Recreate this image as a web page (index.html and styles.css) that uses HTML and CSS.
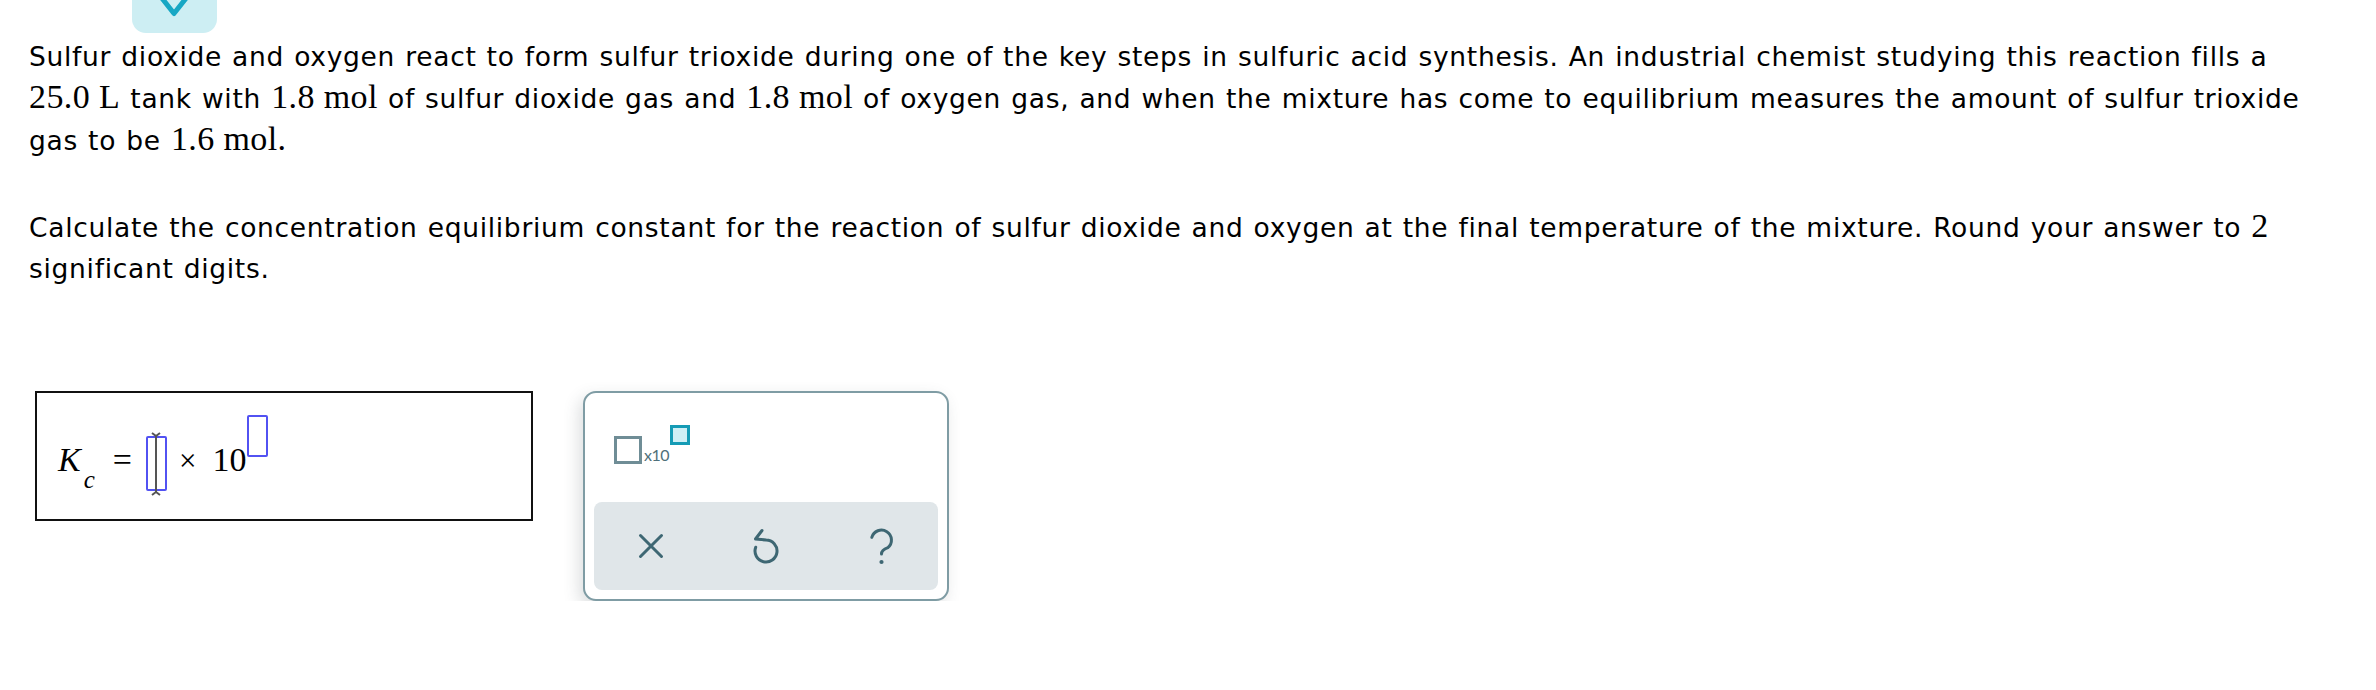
FILE: index.html
```html
<!DOCTYPE html>
<html lang="en">
<head>
<meta charset="utf-8">
<title>Equilibrium constant question</title>
<link rel="stylesheet" href="styles.css">
</head>
<body>
<div class="tab">
  <svg class="chev" width="85" height="33" viewBox="0 0 85 33"><polyline points="29,-3 42,13.5 55,-3" fill="none" stroke="#17a7c4" stroke-width="5" stroke-linecap="round" stroke-linejoin="round"/></svg>
</div>
<div class="question">
  <p class="p1">Sulfur dioxide and oxygen react to form sulfur trioxide during one of the key steps in sulfuric acid synthesis. An industrial chemist studying this reaction fills a <span class="m">25.0 L</span> tank with <span class="m">1.8 mol</span> of sulfur dioxide gas and <span class="m">1.8 mol</span> of oxygen gas, and when the mixture has come to equilibrium measures the amount of sulfur trioxide gas to be <span class="m">1.6 mol.</span></p>
  <p class="p2">Calculate the concentration equilibrium constant for the reaction of sulfur dioxide and oxygen at the final temperature of the mixture. Round your answer to <span class="m">2</span> significant digits.</p>
</div>
<div class="answer-row">
  <div class="answer-box">
    <div class="expr"><span class="var">K</span><span class="sub">c</span><span class="eq">=</span><span class="slot main"><svg class="cursor" width="12" height="64" viewBox="0 0 12 64"><path d="M6 3 V61 M2 1 L6 4 L10 1 M2 63 L6 60 L10 63" fill="none" stroke="#555" stroke-width="2"/></svg></span><span class="times">×</span><span class="ten">10</span><span class="slot sup"></span></div>
  </div>
  <div class="palette">
    <div class="tpl">
      <span class="tpl-box"></span><span class="tpl-x">x10</span><span class="tpl-sup"></span>
    </div>
    <div class="actions">
      <button class="act" aria-label="Clear"><svg width="26" height="26" viewBox="0 0 26 26"><path d="M2.5 2.5 L23.5 23.5 M23.5 2.5 L2.5 23.5" stroke="#3e6773" stroke-width="3" stroke-linecap="round" fill="none"/></svg></button>
      <button class="act" aria-label="Undo"><svg width="32" height="38" viewBox="0 0 32 38"><path d="M16 13 A11 11 0 1 1 5.7 20.2 M12 3.5 L5.5 12 L16 13" stroke="#3e6773" stroke-width="3" stroke-linecap="round" stroke-linejoin="round" fill="none"/></svg></button>
      <button class="act" aria-label="Help"><svg width="26" height="38" viewBox="0 0 26 38"><path d="M3.8 10.4 A10 10 0 1 1 19.9 20.7 Q13.5 23 13.5 27" stroke="#3e6773" stroke-width="3" stroke-linecap="round" fill="none"/><circle cx="13.5" cy="35" r="2.1" fill="#3e6773"/></svg></button>
    </div>
  </div>
</div>
</body>
</html>
```

FILE: styles.css
```css
html, body {
  margin: 0;
  padding: 0;
  background: #ffffff;
}

body {
  font-family: "DejaVu Sans", Verdana, sans-serif;
  color: #000;
}

.tab {
  width: 85px;
  height: 33px;
  margin-left: 132px;
  background: #cdeef3;
  border-radius: 0 0 14px 14px;
  overflow: hidden;
}

.chev {
  display: block;
}

.question {
  padding: 0 56px 0 29px;
  font-size: 26.5px;
  letter-spacing: 0.7px;
  word-spacing: 1px;
}

.question p {
  margin: 0;
  line-height: 42px;
}

.p1 {
  margin-top: 3px !important;
}

.p2 {
  margin-top: 45px !important;
  line-height: 41px !important;
}

.m {
  font-family: "Liberation Serif", "Times New Roman", serif;
  font-size: 34px;
  line-height: normal;
  letter-spacing: 0.4px;
  word-spacing: 0;
}

.answer-row {
  display: flex;
  align-items: flex-start;
  gap: 50px;
  margin: 102px 0 0 35px;
}

.answer-box {
  width: 498px;
  height: 130px;
  box-sizing: border-box;
  border: 2px solid #111;
  padding: 22px 0 0 21px;
}

.expr {
  font-family: "Liberation Serif", "Times New Roman", serif;
  font-size: 34px;
  line-height: 34px;
  white-space: nowrap;
}

.var {
  font-style: italic;
}

.sub {
  font-style: italic;
  font-size: 25px;
  vertical-align: -17px;
  margin-left: 3px;
}

.eq {
  margin: 0 14px 0 18px;
}

.slot {
  display: inline-block;
  box-sizing: border-box;
  border: 2px solid #5252f2;
  border-radius: 2px;
  position: relative;
}

.slot.main {
  width: 21px;
  height: 55px;
  vertical-align: -20px;
}

.cursor {
  position: absolute;
  left: 2.5px;
  top: -6px;
}

.times {
  margin: 0 16px 0 12px;
  font-size: 31px;
}

.slot.sup {
  width: 21px;
  height: 42px;
  vertical-align: 14px;
  margin-left: 1px;
}

.palette {
  width: 366px;
  height: 210px;
  box-sizing: border-box;
  border: 2px solid #7f9ca4;
  border-radius: 13px;
  background: #fff;
  box-shadow: -4px 6px 16px rgba(60, 70, 80, 0.18);
  padding: 0 9px 9px 9px;
  display: flex;
  flex-direction: column;
}

.tpl {
  display: flex;
  align-items: flex-end;
  height: 39px;
  margin: 32px 0 0 20px;
}

.tpl-box {
  width: 28px;
  height: 28px;
  box-sizing: border-box;
  border: 3px solid #6f8d96;
}

.tpl-x {
  font-family: "Lato", "Open Sans", sans-serif;
  font-size: 16px;
  line-height: 16px;
  color: #4f707a;
  margin: 0 0 1px 2px;
  letter-spacing: -0.5px;
}

.tpl-sup {
  align-self: flex-start;
  width: 20px;
  height: 20px;
  box-sizing: border-box;
  border: 3px solid #159bb5;
  background: #cfeff5;
  margin-left: 1px;
}

.actions {
  margin-top: auto;
  height: 88px;
  background: #e0e6e9;
  border-radius: 8px;
  display: flex;
}

.act {
  flex: 1;
  border: 0;
  background: transparent;
  padding: 0;
  display: flex;
  align-items: center;
  justify-content: center;
}

.act svg {
  display: block;
}
```
